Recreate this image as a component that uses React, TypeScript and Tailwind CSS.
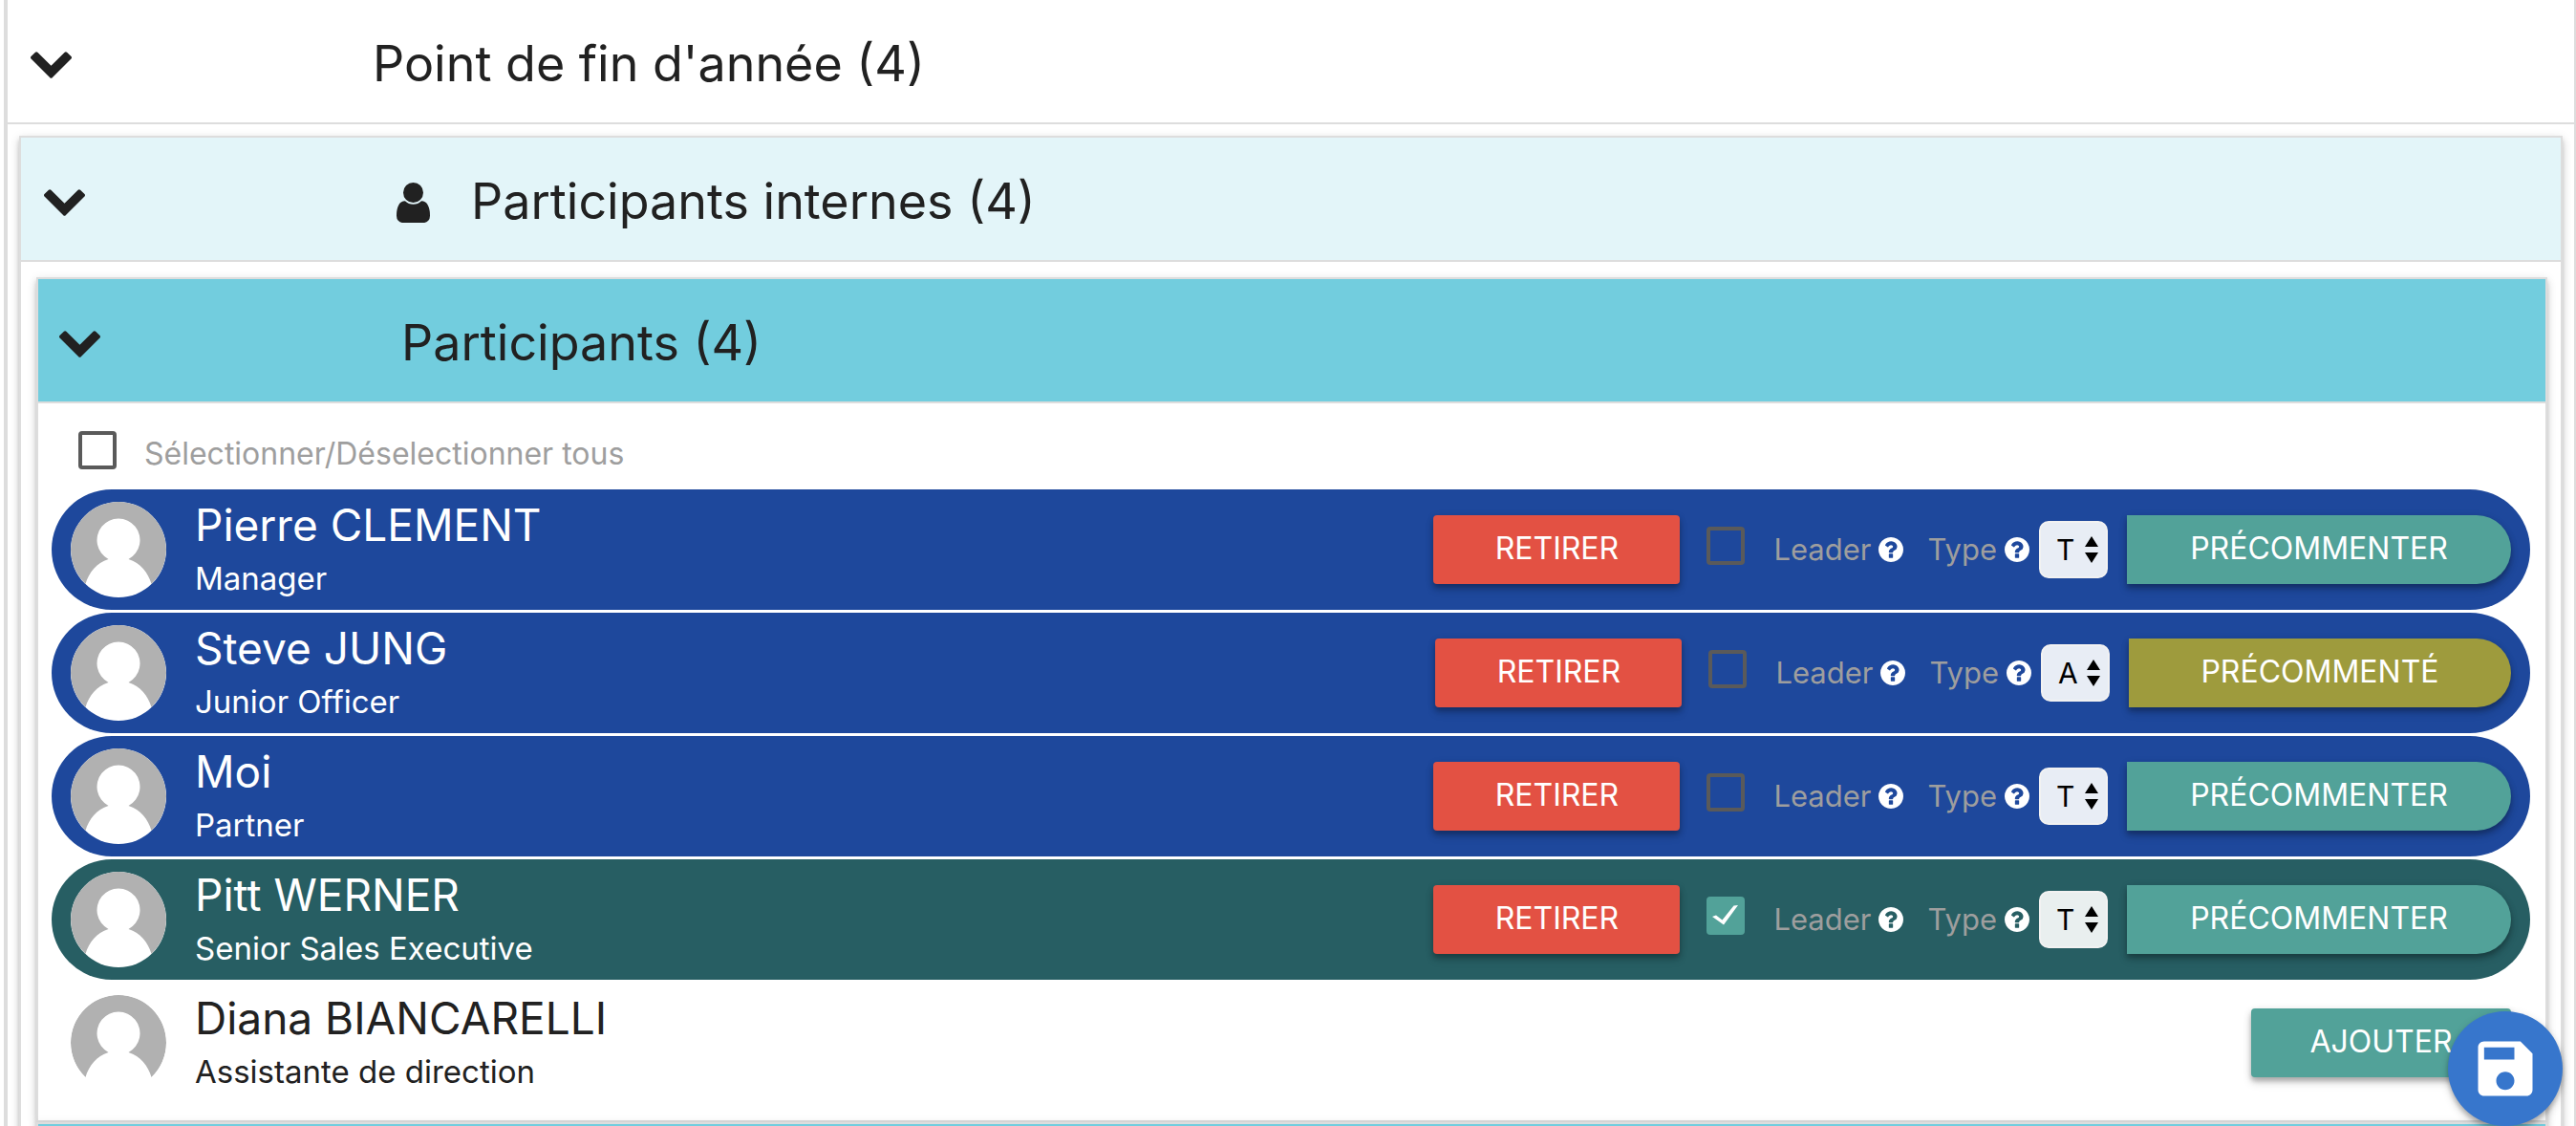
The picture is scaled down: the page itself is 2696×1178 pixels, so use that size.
import { useId, useState } from "react";
import type { ReactNode } from "react";

type Kind = "member" | "leader" | "available";

interface Person {
  name: string;
  role: string;
  kind: Kind;
  type?: "T" | "A";
  commented?: boolean;
}

const people: Person[] = [
  { name: "Pierre CLEMENT", role: "Manager", kind: "member", type: "T" },
  { name: "Steve JUNG", role: "Junior Officer", kind: "member", type: "A", commented: true },
  { name: "Moi", role: "Partner", kind: "member", type: "T" },
  { name: "Pitt WERNER", role: "Senior Sales Executive", kind: "leader", type: "T" },
  { name: "Diana BIANCARELLI", role: "Assistante de direction", kind: "available" },
];

const rowStyle: Record<Kind, string> = {
  member: "bg-[#1e489c] text-white",
  leader: "bg-[#275e63] text-white",
  available: "text-[#212121]",
};

const raised = "shadow-[0_4px_4px_rgba(0,0,0,0.16),0_6px_10px_rgba(0,0,0,0.14),0_2px_8px_rgba(0,0,0,0.12)]";
const card = "border-2 border-[#ddd] shadow-[0_4px_4px_rgba(0,0,0,0.14),0_6px_10px_rgba(0,0,0,0.1),0_2px_10px_rgba(0,0,0,0.1)]";

function ChevronDown() {
  return (
    <svg viewBox="90 533 1612 1035" className="h-7 w-[43px] shrink-0" fill="currentColor" aria-hidden="true">
      <path d="M1683 808l-742 741q-19 19-45 19t-45-19l-742-741q-19-19-19-45.5t19-45.5l166-165q19-19 45-19t45 19l531 531 531-531q19-19 45-19t45 19l166 165q19 19 19 45.5t-19 45.5z" />
    </svg>
  );
}

function UserIcon() {
  return (
    <svg viewBox="0 128 1280 1536" className="h-[42px] w-[35px] shrink-0" fill="currentColor" aria-hidden="true">
      <path d="M1280 1399q0 109-62.500 187t-150.500 78h-854q-88 0-150.500-78t-62.500-187q0-85 8.500-160.500t31.500-152 58.500-131 94-89 134.500-34.500q131 128 313 128t313-128q76 0 134.500 34.500t94 89 58.500 131 31.500 152 8.500 160.500zM1024 512q0 159-112.500 271.500t-271.500 112.500-271.500-112.500-112.500-271.500 112.500-271.500 271.500-112.500 271.500 112.500 112.500 271.500z" />
    </svg>
  );
}

function HelpIcon() {
  return (
    <svg viewBox="128 128 1536 1536" className="size-[26px] shrink-0 text-white" fill="currentColor" aria-hidden="true">
      <path d="M1024 1376v-192q0-14-9-23t-23-9h-192q-14 0-23 9t-9 23v192q0 14 9 23t23 9h192q14 0 23-9t9-23zm256-672q0-88-55.500-163t-138.500-116-170-41q-243 0-371 213-15 24 8 42l132 100q7 6 19 6 16 0 25-12 53-68 86-92 34-24 86-24 48 0 85.500 26t37.500 59q0 38-20 61t-68 45q-63 28-115.500 86.500t-52.500 125.500v36q0 14 9 23t23 9h192q14 0 23-9t9-23q0-19 21.500-49.500t54.500-49.500q32-18 49-28.500t46-35 44.500-48 28-60.500 12.500-81zm384 192q0 209-103 385.500t-279.500 279.500-385.500 103-385.500-103-279.500-279.500-103-385.500 103-385.500 279.500-279.500 385.500-103 385.500 103 279.500 279.500 103 385.500z" />
    </svg>
  );
}

function Avatar() {
  return (
    <svg viewBox="0 0 100 100" className="size-[100px] shrink-0 rounded-full bg-white" aria-hidden="true">
      <path
        d="M15.500 86 A50 50 0 1 1 84.500 86 C81 74 73 64 60.500 60 A22.500 22.500 0 1 0 39.500 60 C27 64 19 74 15.500 86 Z"
        fill="#b1b1b1"
      />
    </svg>
  );
}

function Checkbox({ label, checked, onChange, children, className }: {
  label: string;
  checked: boolean;
  onChange: (value: boolean) => void;
  children?: ReactNode;
  className: string;
}) {
  const id = useId();
  return (
    <div className={className}>
      <span className="relative mb-2 size-10 shrink-0">
        <input
          id={id}
          type="checkbox"
          checked={checked}
          onChange={(e) => onChange(e.target.checked)}
          className="block size-10 appearance-none rounded border-4 border-[#5a5a5a] checked:border-[#52a299] checked:bg-[#52a299]"
        />
        {checked && (
          <svg viewBox="0 0 40 40" className="pointer-events-none absolute inset-0 size-10" aria-hidden="true">
            <path d="M6 21 L10 19.500 L16.500 24.500 L28.500 9.500 L33 9 L18 29.500 Z" fill="#fff" />
          </svg>
        )}
      </span>
      <label htmlFor={id} className="text-[#9e9e9e]">{label}</label>
      {children}
    </div>
  );
}

function SectionHeader({ title, className, icon }: { title: string; className: string; icon?: ReactNode }) {
  return (
    <header className={`flex h-[130px] items-center border-b-2 border-[#ddd] pt-2 text-[#212121] ${className}`}>
      <button type="button" aria-label={title} className="shrink-0">
        <ChevronDown />
      </button>
      {icon}
      <h2 className="pb-0.5 text-[52px] leading-[60px]">{title}</h2>
    </header>
  );
}

function ParticipantRow({ person }: { person: Person }) {
  const [leader, setLeader] = useState(person.kind === "leader");
  const typeId = useId();
  return (
    <li className={`flex h-[126px] items-center justify-between rounded-full pr-5 pl-5 ${rowStyle[person.kind]}`}>
      <div className="flex items-center gap-[30px]">
        <Avatar />
        <div className="pt-1">
          <p className="text-[46px] leading-[56px]">{person.name}</p>
          <p className="text-[33px] leading-[56px]">{person.role}</p>
        </div>
      </div>
      {person.kind === "available" ? (
        <button type="button" className={`h-[72px] w-[272px] rounded bg-[#52a299] pb-0.5 text-[32px] text-white ${raised}`}>
          AJOUTER
        </button>
      ) : (
        <div className="flex items-center text-[31px]">
          <button type="button" className={`h-[72px] w-[258px] rounded bg-[#e35143] pb-0.5 text-[32px] text-white ${raised}`}>
            RETIRER
          </button>
          <Checkbox label="Leader" checked={leader} onChange={setLeader} className="ml-7 flex items-center gap-2 [&>label]:ml-[22px]">
            <HelpIcon />
          </Checkbox>
          <div className="ml-[25px] flex items-center gap-2">
            <label htmlFor={typeId} className="text-[#9e9e9e]">Type</label>
            <HelpIcon />
          </div>
          <div className="relative ml-[10px]">
            <select
              id={typeId}
              defaultValue={person.type}
              className="block h-[60px] w-[72px] appearance-none rounded-[10px] border-2 border-[#f2f2f2] bg-white/90 pl-4 text-[30px] text-black"
            >
              <option>T</option>
              <option>A</option>
            </select>
            <svg viewBox="0 0 14 28" className="pointer-events-none absolute top-4 right-[10px] h-7 w-[14px]" aria-hidden="true">
              <path d="M0 11 L7 0 L14 11 Z M0 17 L7 28 L14 17 Z" fill="#000" />
            </svg>
          </div>
          <button
            type="button"
            className={`ml-5 h-[72px] rounded-l-xs rounded-r-full pb-0.5 text-[32px] text-white ${raised} ${
              person.commented ? "w-[400px] bg-[#9e9b3d]" : "w-[402px] bg-[#52a299]"
            }`}
          >
            {person.commented ? "PRÉCOMMENTÉ" : "PRÉCOMMENTER"}
          </button>
        </div>
      )}
    </li>
  );
}

export default function App() {
  const [all, setAll] = useState(false);
  return (
    <main className="h-screen overflow-hidden bg-white pl-1 font-['Inter',sans-serif]">
      <section className="border-r-2 border-l-4 border-[#ddd]">
        <SectionHeader title="Point de fin d'année (4)" className="gap-[315px] pl-6" />
        <div className="pt-3 pr-3 pl-3">
          <section className={card}>
            <SectionHeader
              title="Participants internes (4)"
              className="bg-[#e3f5f9] pl-6 [&>button]:mr-[326px] [&>h2]:ml-[43px]"
              icon={<UserIcon />}
            />
            <div className="pt-4 pr-[14px] pl-4">
              <section className={card}>
                <SectionHeader title="Participants (4)" className="gap-[315px] bg-[#72cdde] pl-[22px]" />
                <div className="h-[750px] pr-4 pl-[14px]">
                  <Checkbox
                    label="Sélectionner/Déselectionner tous"
                    checked={all}
                    onChange={setAll}
                    className="flex h-[90px] items-center gap-[29px] pt-4 pl-7 text-[32px]"
                  />
                  <ul className="flex flex-col gap-[3px]">
                    {people.map((person) => (
                      <ParticipantRow key={person.name} person={person} />
                    ))}
                  </ul>
                </div>
              </section>
              <section className={card}>
                <div className="h-[130px] bg-[#72cdde]" />
              </section>
            </div>
          </section>
        </div>
      </section>
      <button
        type="button"
        aria-label="Enregistrer"
        className={`fixed right-[14px] bottom-0 flex size-[120px] items-center justify-center rounded-full bg-[#3776cc] text-white ${raised}`}
      >
        <svg viewBox="0 0 24 24" className="size-[76px]" fill="currentColor" aria-hidden="true">
          <path d="M17 3H5c-1.110 0-2 .9-2 2v14c0 1.100.89 2 2 2h14c1.100 0 2-.9 2-2V7l-4-4zm-5 16c-1.660 0-3-1.340-3-3s1.340-3 3-3 3 1.340 3 3-1.340 3-3 3zm3-10H5V5h10v4z" />
        </svg>
      </button>
    </main>
  );
}
